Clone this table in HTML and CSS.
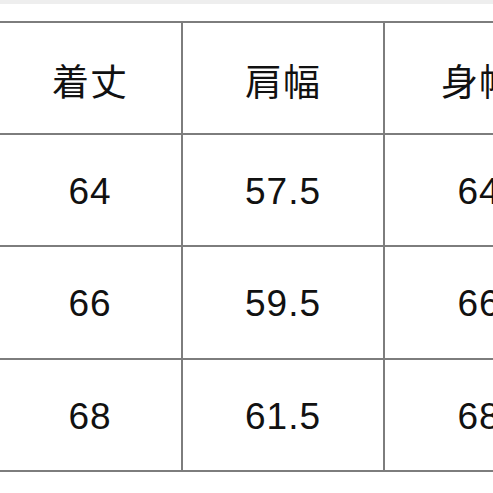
FILE: index.html
```html
<!DOCTYPE html>
<html lang="ja">
<head>
<meta charset="utf-8">
<link rel="stylesheet" href="styles.css">
</head>
<body>
<div class="top-strip"></div>
<div class="sheet">
  <div class="grid">
    <div class="cell">着丈</div>
    <div class="cell">肩幅</div>
    <div class="cell">身幅</div>
    <div class="cell">64</div>
    <div class="cell">57.5</div>
    <div class="cell">64</div>
    <div class="cell">66</div>
    <div class="cell">59.5</div>
    <div class="cell">66</div>
    <div class="cell">68</div>
    <div class="cell">61.5</div>
    <div class="cell">68</div>
  </div>
</div>
</body>
</html>
```
FILE: styles.css
```css
html, body {
  margin: 0;
  padding: 0;
  background: #ffffff;
  width: 493px;
  height: 493px;
  overflow: hidden;
}
.top-strip {
  height: 4px;
  background: #eeeeee;
}
.sheet {
  padding-top: 17px;
}
.grid {
  display: grid;
  grid-template-columns: 182px 200px 188px;
  grid-template-rows: 110px 110px 111px 110px;
  gap: 2px;
  padding: 2px;
  margin-left: -3px;
  width: max-content;
  background: #7d7d7d;
}
.cell {
  background: #ffffff;
  display: flex;
  align-items: center;
  justify-content: center;
  font-family: "Liberation Sans", "Noto Sans CJK JP", sans-serif;
  font-size: 37px;
  letter-spacing: 1px;
  padding-top: 3px;
  color: #111111;
}
```
